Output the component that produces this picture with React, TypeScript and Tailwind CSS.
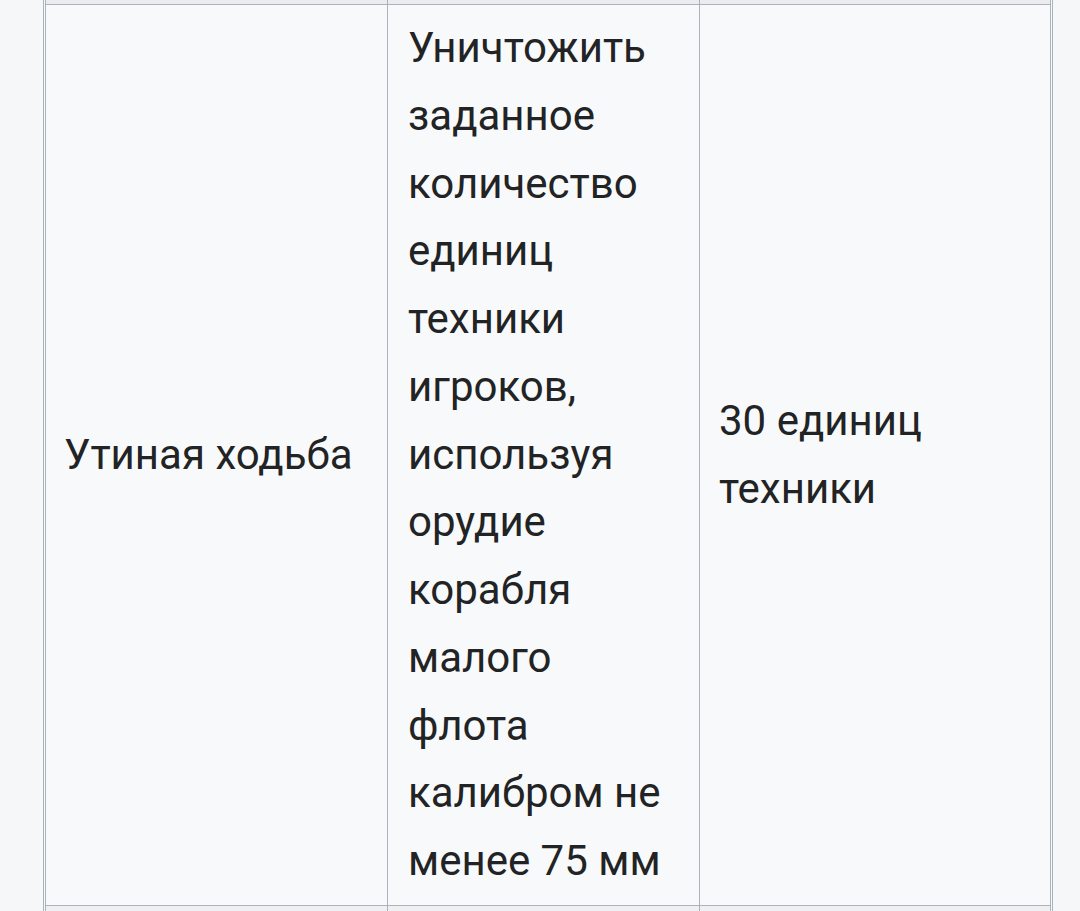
const rows = {
  name: 'Утиная ходьба',
  task: 'Уничтожить заданное количество единиц техники игроков, используя орудие корабля малого флота калибром не менее 75 мм',
  goal: '30 единиц техники',
};

export default function App() {
  return (
    <div className="min-h-[911px] w-full overflow-hidden bg-[#f6f7f8] font-['Roboto',sans-serif] text-[#222324]">
      <div className="ml-[43px] w-[1010px] border-x border-[#a8b3bb] px-px bg-[#f8f9fa]">
        <div className="grid grid-cols-[341px_311px_350px] gap-px border-x border-[#a8b3bb] bg-[#a8b3bb]">
          {/* tail of the previous row */}
          <div className="h-[4px] bg-[#eaecf0]" />
          <div className="h-[4px] bg-[#eaecf0]" />
          <div className="h-[4px] bg-[#eaecf0]" />

          <Cell center pad="pl-[18px]">{rows.name}</Cell>
          <div className="bg-[#f8f9fa] pl-[20px] pr-[18px] pt-[9px] pb-[10px] text-[42px] leading-[67.75px]">
            {rows.task}
          </div>
          <Cell center pad="pl-[19px]">{rows.goal}</Cell>

          {/* start of the next row */}
          <div className="h-[8px] bg-[#eef0f2]" />
          <div className="h-[8px] bg-[#eef0f2]" />
          <div className="h-[8px] bg-[#eef0f2]" />
        </div>
      </div>
    </div>
  );
}

function Cell({ children, center, pad }: { children: React.ReactNode; center?: boolean; pad: string }) {
  return (
    <div
      className={
        (center ? 'flex items-center ' : '') +
        'bg-[#f8f9fa] pr-[18px] text-[42px] leading-[67.75px] ' +
        pad
      }
    >
      <span>{children}</span>
    </div>
  );
}
